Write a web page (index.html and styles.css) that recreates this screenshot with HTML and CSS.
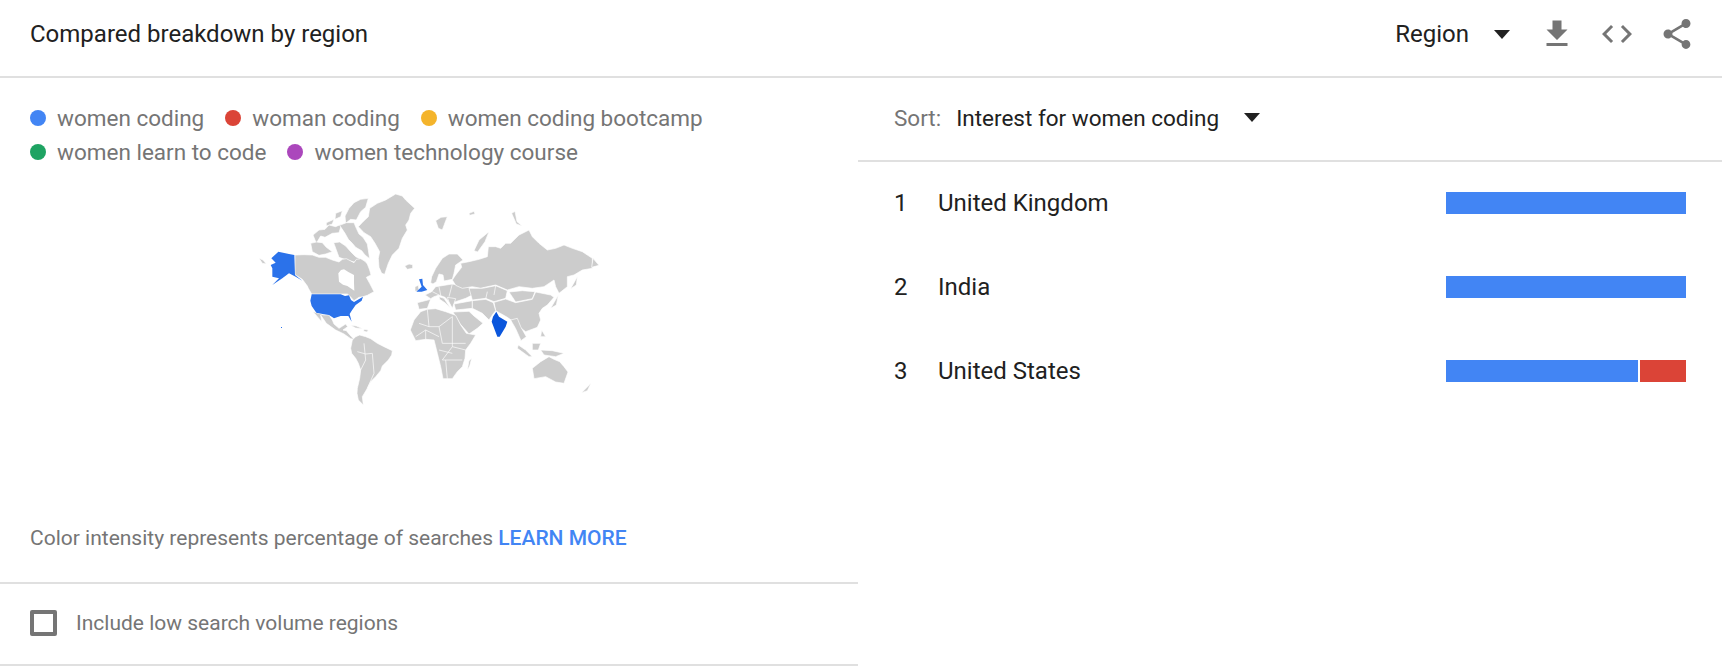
FILE: index.html
```html
<!DOCTYPE html>
<html lang="en">
<head>
<meta charset="utf-8">
<title>Compared breakdown by region</title>
<link rel="stylesheet" href="styles.css">
</head>
<body>
<header class="header">
  <h1 class="title">Compared breakdown by region</h1>
  <div class="tools">
    <span class="select-label">Region</span>
    <span class="arrow arrow-region"></span>
    <svg class="icon icon-first" viewBox="0 0 24 24"><path d="M19 9h-4V3H9v6H5l7 7 7-7zM5 18v2h14v-2H5z"/></svg>
    <svg class="icon" viewBox="0 0 24 24"><path d="M9.4 16.6L4.8 12l4.6-4.6L8 6l-6 6 6 6 1.4-1.4zm5.2 0l4.6-4.6-4.6-4.6L16 6l6 6-6 6-1.4-1.4z"/></svg>
    <svg class="icon" viewBox="0 0 24 24"><path d="M18 16.08c-.76 0-1.44.3-1.96.77L8.91 12.7c.05-.23.09-.46.09-.7s-.04-.47-.09-.7l7.05-4.11c.54.5 1.25.81 2.04.81 1.66 0 3-1.34 3-3s-1.34-3-3-3-3 1.34-3 3c0 .24.04.47.09.7L8.04 9.81C7.5 9.31 6.79 9 6 9c-1.66 0-3 1.34-3 3s1.34 3 3 3c.79 0 1.5-.31 2.04-.81l7.12 4.16c-.05.21-.08.43-.08.65 0 1.61 1.31 2.92 2.92 2.92 1.61 0 2.92-1.31 2.92-2.92s-1.31-2.92-2.92-2.92z"/></svg>
  </div>
</header>
<main class="main">
  <section class="left">
    <div class="legend">
      <div class="legend-row">
        <span class="legend-item"><i class="dot blue"></i>women coding</span>
        <span class="legend-item"><i class="dot red"></i>woman coding</span>
        <span class="legend-item"><i class="dot yellow"></i>women coding bootcamp</span>
      </div>
      <div class="legend-row">
        <span class="legend-item"><i class="dot green"></i>women learn to code</span>
        <span class="legend-item"><i class="dot purple"></i>women technology course</span>
      </div>
    </div>
    <svg class="map" viewBox="0 0 1140 720">
      <g class="land">
        <!-- Greenland -->
        <path d="M358 140L372 125 388 110 392 85 415 70 440 60 470 42 490 48 500 60 527 85 515 100 510 120 500 135 505 150 490 175 480 205 460 225 448 250 437 283 428 280 420 262 418 235 422 215 408 190 395 170 375 158Z"/>
        <!-- Canadian Arctic -->
        <path d="M318 108L330 85 345 68 365 58 388 55 380 82 365 95 352 120 335 118 320 130Z"/>
        <path d="M290 100L310 92 305 110 288 118Z"/>
        <path d="M262 128L285 118 280 132 262 138Z"/>
        <path d="M222 165L240 150 258 148 270 135 290 140 308 132 300 158 280 160 258 172 245 168 232 190Z"/>
        <path d="M302 136L322 128 345 128 352 145 360 162 372 172 385 192 392 236 378 225 368 212 350 202 340 190 328 178 318 160Z"/>
        <path d="M215 190L232 186 250 188 262 202 280 215 260 222 240 226 220 215Z"/>
        <path d="M284 188L302 186 320 198 335 215 350 230 376 242 345 246 322 240 300 232 292 210Z"/>
        <!-- Canada -->
        <path d="M168 225L195 224 220 225 240 232 260 232 280 240 300 246 310 238 322 236 345 248 352 238 365 236 378 244 385 252 392 270 396 285 382 292 392 310 405 335 392 342 385 346 372 350 360 352 345 362 332 348 325 342 218 342 208 325 205 318 190 298 178 290 168 285Z"/>
        <path class="water" d="M298 280L306 270 315 268 328 276 345 285 345 308 346 332 335 325 325 318 312 314 300 305Z"/>
        <path d="M60 235L72 240 82 252 70 250Z"/>
        <!-- Mexico and Central America -->
        <path d="M222 395L255 405 270 405 280 420 285 432 300 445 320 432 326 440 312 450 322 452 332 464 345 478 335 476 315 462 290 450 262 430 245 405 248 425Z"/>
        <path d="M335 436L352 438 372 446 350 444Z"/>
        <path d="M375 448L388 450 384 456 374 454Z"/>
        <!-- South America -->
        <path d="M340 480L350 470 362 465 380 470 395 476 415 490 435 500 460 512 458 525 448 540 430 558 425 572 410 590 395 605 385 625 370 650 373 675 358 660 354 640 355 625 362 595 365 570 358 550 350 535 338 520 335 505Z"/>
        <!-- Iceland, Svalbard and other northern islands -->
        <path d="M497 258L510 252 521 254 521 265 505 268Z"/>
        <path d="M590 122L606 112 625 110 618 128 610 150 598 145Z"/>
        <path d="M705 212L720 180 750 155 738 185 716 216Z"/>
        <path d="M690 100L705 94 708 102 692 106Z"/>
        <path d="M818 100L828 94 834 125 850 138 832 132Z"/>
        <!-- Europe -->
        <path d="M575 308L578 290 590 265 610 235 630 222 655 222 672 240 650 255 645 280 640 298 615 303 612 285 600 282 592 305 582 312Z"/>
        <path d="M528 320L538 316 540 332 528 334Z"/>
        <path d="M535 368L575 358 565 385 540 388Z"/>
        <path d="M558 345L578 335 590 320 640 312 690 322 700 345 680 355 650 365 630 365 618 352 600 345 585 350 575 356Z"/>
        <path d="M600 350L615 355 635 385 620 370 602 358Z"/>
        <path d="M625 352L650 356 640 385 630 366Z"/>
        <!-- Russia -->
        <path d="M640 300L650 285 668 262 665 250 690 245 720 238 745 230 748 200 770 200 785 205 800 190 815 190 840 165 870 150 880 170 900 190 925 210 950 205 975 195 1000 205 1030 215 1060 235 1060 265 1030 270 1005 285 985 290 985 320 960 340 950 320 945 300 915 320 880 325 840 320 805 330 770 315 745 320 725 325 700 320 670 325 650 316Z"/>
        <path d="M1062 235L1080 256 1058 262Z"/>
        <path d="M995 326L1015 290 1012 315Z"/>
        <!-- Asia -->
        <path d="M690 325L730 325 770 317 805 332 800 355 765 365 740 355 700 360Z"/>
        <path d="M810 336L850 332 888 335 880 356 830 366Z"/>
        <path d="M800 357L830 368 880 358 890 336 935 345 945 352 925 375 910 385 900 400 905 420 895 442 860 455 840 440 830 430 805 412 770 392 765 367Z"/>
        <path d="M645 372L700 362 700 385 650 390Z"/>
        <path d="M700 385L700 362 740 358 763 368 770 392 762 402 750 420 730 400Z"/>
        <path d="M642 396L690 394 705 408 732 430 715 445 690 462 662 430Z"/>
        <path d="M815 420L835 415 845 440 862 470 846 482 830 446Z"/>
        <path d="M935 385L958 345 952 375Z"/>
        <!-- Africa -->
        <path d="M545 395L565 388 590 386 620 395 650 406 665 435 682 460 710 465 695 490 680 510 678 535 670 560 655 575 640 596 612 596 605 560 595 520 585 480 560 478 530 482 514 450 525 420Z"/>
        <path d="M690 542L698 535 692 558 685 570Z"/>
        <!-- Indonesia, Philippines, Australia, New Zealand -->
        <path d="M838 495L860 510 880 530 870 530 835 505Z"/>
        <path d="M880 490L905 490 898 510 880 510Z"/>
        <path d="M905 510L940 512 975 520 950 530 915 525Z"/>
        <path d="M908 450L920 470 905 470Z"/>
        <path d="M880 565L905 545 930 530 945 538 962 545 975 560 987 576 975 610 950 606 920 590 885 596Z"/>
        <path d="M1028 638L1056 610 1045 632Z"/>
      </g>
      <g class="borders">
        <path d="M540 430L570 440 600 440 640 410M600 440L610 490 680 490M530 470L560 450 600 470M640 410L640 500 610 540 670 540M640 500L680 510M620 540L625 596M565 388L570 440M560 450L560 478M600 510L640 520"/>
        <path d="M355 515L380 522 400 520 405 580 385 625M375 490L380 540 365 570"/>
        <path d="M740 358L745 335M770 317L765 345M580 335L600 345M640 312L630 350M600 320L605 345"/>
      </g>
      <g class="us">
        <path d="M97 235L118 215 150 222 166 225 168 285 190 302 170 290 150 280 130 295 100 315 120 295 100 290 100 265 95 255 110 248Z"/>
        <path d="M218 343L305 343 318 348 330 346 336 360 345 366 372 350 368 362 350 375 338 392 332 402 338 425 328 408 305 408 285 415 270 405 255 403 232 398 218 378 214 362Z"/>
        <path d="M126 441h3v3h-3Z"/>
      </g>
      <path class="uk" d="M540 298L550 296 552 315 565 330 548 335 532 335 548 320Z"/>
      <path class="india" d="M772 395L780 410 805 425 800 440 782 470 775 470 758 425 762 410Z"/>
    </svg>
    <p class="note">Color intensity represents percentage of searches <a class="learn" href="#">LEARN MORE</a></p>
    <label class="check-row"><span class="checkbox"></span><span>Include low search volume regions</span></label>
  </section>
  <section class="right">
    <div class="sort">
      <span class="sort-label">Sort:</span>
      <span class="sort-value">Interest for women coding</span>
      <span class="arrow arrow-sort"></span>
    </div>
    <ol class="rows">
      <li class="row"><span class="rank">1</span><span class="country">United Kingdom</span><span class="bar"><i class="seg blue" style="width:240px"></i></span></li>
      <li class="row"><span class="rank">2</span><span class="country">India</span><span class="bar"><i class="seg blue" style="width:240px"></i></span></li>
      <li class="row"><span class="rank">3</span><span class="country">United States</span><span class="bar"><i class="seg blue" style="width:192px"></i><i class="seg red" style="width:46px"></i></span></li>
    </ol>
  </section>
</main>
</body>
</html>
```

FILE: styles.css
```css
* { box-sizing: border-box; }
html, body { margin: 0; padding: 0; background: #fff; }
body { font-family: Roboto, "Liberation Sans", sans-serif; font-size: 24px; color: #212121; width: 1722px; height: 666px; overflow: hidden; }

.header { display: flex; align-items: center; justify-content: space-between; height: 78px; padding: 0 27px 8px 30px; border-bottom: 2px solid #e0e0e0; }
.title { margin: 0; font-size: 24px; font-weight: 400; }
.tools { display: flex; align-items: center; }
.select-label { margin-right: 25px; }
.arrow { width: 0; height: 0; border-left: 8px solid transparent; border-right: 8px solid transparent; border-top: 9px solid #212121; }
.icon { width: 36px; height: 36px; fill: #757575; margin-left: 24px; }
.icon-first { margin-left: 29px; }

.main { display: flex; height: 588px; }
.left { width: 858px; display: flex; flex-direction: column; }
.right { flex: 1; }

.legend { padding: 23px 30px 0; color: #757575; font-size: 22.5px; }
.legend-row { display: flex; height: 34px; align-items: center; gap: 21px; }
.legend-item { display: flex; align-items: center; }
.dot { display: block; width: 16px; height: 16px; border-radius: 50%; margin-right: 11px; }
.blue { background: #4285f4; }
.red { background: #db4437; }
.yellow { background: #f4b42b; }
.green { background: #1ea362; }
.purple { background: #ab47bc; }

.map { display: block; width: 380px; height: 240px; margin: 11px auto 0; flex: none; filter: blur(0.4px); }
.land path { fill: #ccc; stroke: #fff; stroke-width: 2; stroke-linejoin: round; }
.land .water { fill: #fff; stroke: none; }
.borders path { fill: none; stroke: #fff; stroke-width: 2; }
.us path { fill: #2b72ea; }
.uk { fill: #2b72ea; }
.india { fill: #0b56dc; }

.note { margin: 106px 30px 0; height: 24px; line-height: 24px; font-size: 21px; color: #757575; }
.learn { color: #4285f4; text-decoration: none; font-weight: 500; }

.check-row { display: flex; align-items: center; margin-top: 32px; height: 84px; border-top: 2px solid #e0e0e0; border-bottom: 2px solid #e0e0e0; padding: 0 30px 3px; font-size: 21px; color: #757575; }
.checkbox { width: 27px; height: 26px; border: 4px solid #757575; border-radius: 2px; margin-right: 19px; }

.sort { display: flex; align-items: center; height: 84px; padding: 0 0 2px 36px; border-bottom: 2px solid #e0e0e0; font-size: 22.5px; }
.sort-label { color: #757575; margin-right: 15px; }
.arrow-sort { margin-left: 25px; margin-top: -2px; }

.rows { list-style: none; margin: 0; padding: 0; }
.row { display: flex; align-items: center; height: 84px; padding: 0 36px 2px; }
.rank { width: 44px; }
.country { flex: 1; }
.bar { display: flex; gap: 2px; width: 240px; height: 22px; }
.seg { display: block; height: 22px; }
```
